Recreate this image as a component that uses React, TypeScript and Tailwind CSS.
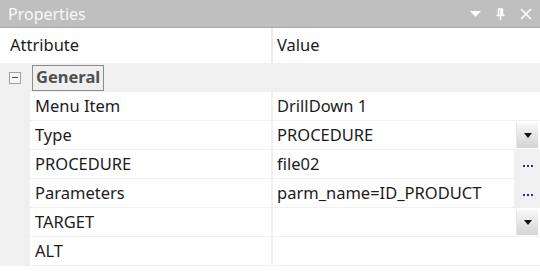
import React from "react";

type Row = { label: string; value: string; button?: "drop" | "dots" };

const rows: Row[] = [
  { label: "Menu Item", value: "DrillDown 1" },
  { label: "Type", value: "PROCEDURE", button: "drop" },
  { label: "PROCEDURE", value: "file02", button: "dots" },
  { label: "Parameters", value: "parm_name=ID_PRODUCT", button: "dots" },
  { label: "TARGET", value: "", button: "drop" },
  { label: "ALT", value: "" },
];

function DropButton() {
  return (
    <div className="w-[22px] h-[25px] mr-[2px] flex items-center justify-center bg-gradient-to-b from-[#f7f7f7] to-[#d4d4d4] border-l border-[#e6e6e6]">
      <svg width="8" height="5" viewBox="0 0 8 5">
        <path d="M0 0 H8 L4 5 Z" fill="#111" />
      </svg>
    </div>
  );
}

function DotsButton() {
  return (
    <div className="w-[24px] h-full flex items-center justify-center gap-[2px] bg-[#f0f0f0] pt-[3px]">
      <span className="w-[2px] h-[2px] bg-[#3a2f6a]" />
      <span className="w-[2px] h-[2px] bg-[#3a2f6a]" />
      <span className="w-[2px] h-[2px] bg-[#3a2f6a]" />
    </div>
  );
}

export default function App() {
  return (
    <div className="w-[540px] h-[271px] overflow-hidden bg-white flex flex-col font-['Noto_Sans','Open_Sans',sans-serif] text-[16.5px] text-[#1b1b1b]">
      {/* title bar */}
      <div className="h-[28px] shrink-0 bg-[#bfbfbf] border-b border-[#a8a8a8] flex items-center pl-[8px] pr-[8px] text-[16px] text-[#f8f8f8]">
        <span className="flex-1">Properties</span>
        <div className="flex items-center gap-[15px]">
          <svg width="11" height="6" viewBox="0 0 11 6">
            <path d="M0 0 H11 L5.5 6 Z" fill="#fff" />
          </svg>
          <svg width="9" height="12" viewBox="0 0 9 12">
            <path d="M2 1 H7 M2.5 1 V7 M6.5 1 V7 M5 1 V7 M0.5 7.5 H8.5 M4.5 8 V12" stroke="#fff" strokeWidth="1.6" fill="none" />
          </svg>
          <svg width="12" height="12" viewBox="0 0 12 12">
            <path d="M1 1 L11 11 M11 1 L1 11" stroke="#fff" strokeWidth="1.6" />
          </svg>
        </div>
      </div>

      {/* header */}
      <div className="h-[35px] shrink-0 flex bg-white">
        <div className="w-[271px] pl-[10px] flex items-center">Attribute</div>
        <div className="w-[2px] bg-[#ebebeb]" />
        <div className="flex-1 pl-[4px] flex items-center">Value</div>
      </div>

      {/* category */}
      <div className="h-[29px] shrink-0 bg-[#f0f0f0] flex items-center">
        <div className="ml-[9px] w-[12px] h-[12px] border border-[#a0a0a0] bg-[#f7f7f7] flex items-center justify-center">
          <div className="w-[6px] h-[1px] bg-[#3e5578]" />
        </div>
        <div className="ml-[11px] h-[26px] px-[3px] border border-[#8c8c8c] flex items-center font-bold text-[#505050]">
          General
        </div>
      </div>

      {/* rows */}
      {rows.map((r) => (
        <div key={r.label} className="h-[29px] shrink-0 flex bg-[#f0f0f0]">
          <div className="w-[30px]" />
          <div className="w-[241px] h-[28px] bg-white pl-[5px] flex items-center">{r.label}</div>
          <div className="w-[2px]" />
          <div className="flex-1 h-[28px] flex">
            <div className="flex-1 bg-white pl-[4px] flex items-center">{r.value}</div>
            {r.button === "drop" && (
              <div className="pl-[2px] bg-white flex items-center">
                <DropButton />
              </div>
            )}
            {r.button === "dots" && (
              <div className="pl-[2px] flex">
                <DotsButton />
              </div>
            )}
          </div>
        </div>
      ))}
      <div className="flex-1 bg-white" />
    </div>
  );
}
